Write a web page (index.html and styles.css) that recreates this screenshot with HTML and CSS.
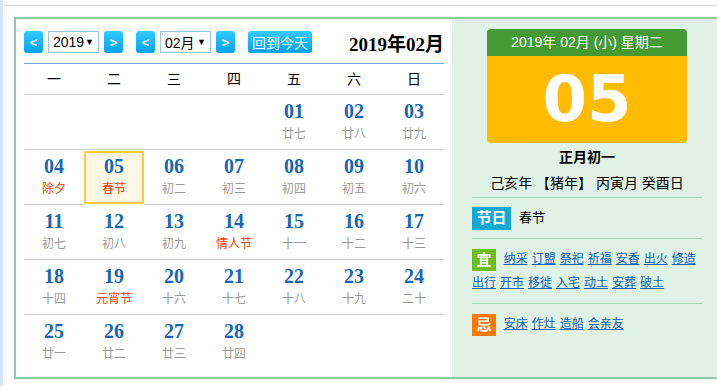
FILE: index.html
```html
<!DOCTYPE html>
<html lang="zh-CN">
<head>
  <meta charset="UTF-8">
  <title>万年历</title>
  <link rel="stylesheet" href="styles.css">
</head>
<body>
  <div class="page">
    <div class="topbar"></div>

    <div class="calendar">
      <div class="month-view">
        <div class="controls">
          <span class="btn">&lt;</span>
          <span class="picker">2019 <i>&#9660;</i></span>
          <span class="btn">&gt;</span>
          <span class="btn sep">&lt;</span>
          <span class="picker">02月 <i>&#9660;</i></span>
          <span class="btn">&gt;</span>
          <span class="btn today sep">回到今天</span>
          <span class="title">2019年02月</span>
        </div>

        <div class="weekdays">
          <span>一</span><span>二</span><span>三</span><span>四</span><span>五</span><span>六</span><span>日</span>
        </div>

        <div class="days">
          <div class="day"></div>
          <div class="day"></div>
          <div class="day"></div>
          <div class="day"></div>
          <div class="day"><b>01</b><small>廿七</small></div>
          <div class="day"><b>02</b><small>廿八</small></div>
          <div class="day"><b>03</b><small>廿九</small></div>

          <div class="day"><b>04</b><small class="fest">除夕</small></div>
          <div class="day current"><b>05</b><small class="fest">春节</small></div>
          <div class="day"><b>06</b><small>初二</small></div>
          <div class="day"><b>07</b><small>初三</small></div>
          <div class="day"><b>08</b><small>初四</small></div>
          <div class="day"><b>09</b><small>初五</small></div>
          <div class="day"><b>10</b><small>初六</small></div>

          <div class="day"><b>11</b><small>初七</small></div>
          <div class="day"><b>12</b><small>初八</small></div>
          <div class="day"><b>13</b><small>初九</small></div>
          <div class="day"><b>14</b><small class="fest">情人节</small></div>
          <div class="day"><b>15</b><small>十一</small></div>
          <div class="day"><b>16</b><small>十二</small></div>
          <div class="day"><b>17</b><small>十三</small></div>

          <div class="day"><b>18</b><small>十四</small></div>
          <div class="day"><b>19</b><small class="fest">元宵节</small></div>
          <div class="day"><b>20</b><small>十六</small></div>
          <div class="day"><b>21</b><small>十七</small></div>
          <div class="day"><b>22</b><small>十八</small></div>
          <div class="day"><b>23</b><small>十九</small></div>
          <div class="day"><b>24</b><small>二十</small></div>

          <div class="day"><b>25</b><small>廿一</small></div>
          <div class="day"><b>26</b><small>廿二</small></div>
          <div class="day"><b>27</b><small>廿三</small></div>
          <div class="day"><b>28</b><small>廿四</small></div>
          <div class="day"></div>
          <div class="day"></div>
          <div class="day"></div>
        </div>
      </div>

      <div class="detail">
        <div class="date-card">
          <div class="card-head">2019年 02月 (小) 星期二</div>
          <div class="card-day">05</div>
        </div>
        <div class="lunar">正月初一</div>
        <div class="ganzhi">己亥年 【猪年】 丙寅月 癸酉日</div>

        <div class="section festival">
          <span class="tag tag-fest">节日</span>
          <span>春节</span>
        </div>

        <div class="section">
          <span class="tag tag-yi">宜</span>
          <a href="#">纳采</a><a href="#">订盟</a><a href="#">祭祀</a><a href="#">祈福</a><a href="#">安香</a><a href="#">出火</a><a href="#">修造</a><a href="#">出行</a><a href="#">开市</a><a href="#">移徙</a><a href="#">入宅</a><a href="#">动土</a><a href="#">安葬</a><a href="#">破土</a>
        </div>

        <div class="section last">
          <span class="tag tag-ji">忌</span>
          <a href="#">安床</a><a href="#">作灶</a><a href="#">造船</a><a href="#">会亲友</a>
        </div>
      </div>
    </div>
  </div>
</body>
</html>
```

FILE: styles.css
```css
body {
  margin: 0;
  font-family: "Liberation Sans", "Noto Sans CJK SC", sans-serif;
  font-size: 13px;
  color: #000;
  overflow: hidden;
}
.page {
  border-left: 3px solid #d3e5f5;
  height: 386px;
  box-sizing: border-box;
}
.topbar {
  height: 5px;
  border-bottom: 1px solid #dcdcdc;
}
.calendar {
  display: flex;
  margin: 11px 0 0 11px;
  width: 720px;
  border: 2px solid #93c89f;
  border-right: none;
}

/* left: month grid */
.month-view {
  width: 420px;
  padding: 12px 8px 7px 8px;
  background: #fff;
}
.controls {
  display: flex;
  align-items: center;
  gap: 5px;
  height: 22px;
  padding-bottom: 10px;
  border-bottom: 1px solid #72a9de;
}
.btn {
  display: inline-flex;
  align-items: center;
  justify-content: center;
  width: 19px;
  height: 22px;
  border-radius: 3px;
  background: linear-gradient(#35c9ff, #00a2ef);
  color: #fff;
  font-size: 13px;
  font-weight: bold;
}
.btn.sep {
  margin-left: 8px;
}
.btn.today {
  width: 64px;
  font-weight: normal;
  font-size: 14px;
}
.picker {
  display: inline-flex;
  align-items: center;
  justify-content: space-between;
  box-sizing: border-box;
  width: 51px;
  height: 22px;
  padding: 0 4px 0 4px;
  border: 1px solid #9cc7e2;
  font-size: 14px;
}
.picker i {
  font-style: normal;
  font-size: 9px;
}
.title {
  margin-left: auto;
  font-family: "Liberation Serif", "Noto Sans CJK SC", serif;
  font-weight: bold;
  font-size: 19px;
}
.weekdays {
  display: grid;
  grid-template-columns: repeat(7, 1fr);
  height: 30px;
  line-height: 30px;
  text-align: center;
  font-size: 14px;
  border-bottom: 1px solid #cfcfcf;
}
.days {
  display: grid;
  grid-template-columns: repeat(7, 1fr);
}
.day {
  display: flex;
  flex-direction: column;
  align-items: center;
  height: 55px;
  border-bottom: 1px solid #cfcfcf;
  box-sizing: border-box;
}
.days .day:nth-last-child(-n+7) {
  border-bottom: none;
}
.day b {
  margin-top: 5px;
  height: 22px;
  line-height: 22px;
  font-family: "Liberation Serif", serif;
  font-size: 20px;
  color: #1767b5;
}
.day small {
  margin-top: 2px;
  font-size: 12px;
  color: #999;
}
.day small.fest {
  color: #f23d00;
}
.day.current {
  margin: 1px 0;
  height: 53px;
  border: 2px solid #ffcb45;
  background: #fff8e7;
  width: 60px;
}
.day.current b {
  margin-top: 2px;
}

/* right: day detail */
.detail {
  width: 230px;
  padding: 10px 20px 0 20px;
  background: #e0f1e6;
}
.date-card {
  width: 200px;
  margin: 0 auto;
  border-radius: 4px;
  overflow: hidden;
}
.card-head {
  height: 27px;
  line-height: 27px;
  background: #459a34;
  color: #fff;
  text-align: center;
  font-size: 14px;
}
.card-day {
  height: 87px;
  line-height: 87px;
  background: #ffbb00;
  color: #fff;
  text-align: center;
  font-family: "DejaVu Sans", sans-serif;
  font-weight: bold;
  font-size: 64px;
}
.lunar {
  margin-top: 5px;
  text-align: center;
  font-weight: bold;
  font-size: 14px;
  line-height: 18px;
}
.ganzhi {
  margin-top: 7px;
  padding-bottom: 4px;
  text-align: center;
  font-size: 14px;
  line-height: 20px;
  border-bottom: 1px solid #a9d4b5;
}
.section {
  padding: 8px 0 8px 0;
  line-height: 24px;
  border-bottom: 1px solid #a9d4b5;
  font-size: 13px;
}
.section.last {
  border-bottom: none;
}
.festival {
  display: flex;
  align-items: center;
  gap: 8px;
}
.tag {
  display: inline-block;
  vertical-align: middle;
  width: 24px;
  height: 22px;
  line-height: 22px;
  margin-right: 4px;
  text-align: center;
  color: #fff;
  font-weight: bold;
  font-size: 15px;
}
.tag-fest {
  width: 39px;
  height: 23px;
  margin-right: 0;
  background: #16a8d4;
}
.tag-yi {
  background: #6cbd1e;
}
.tag-ji {
  background: #fd7a00;
}
.section a {
  display: inline-block;
  margin-right: 4px;
  color: #0b62b0;
  font-size: 12px;
}
```
